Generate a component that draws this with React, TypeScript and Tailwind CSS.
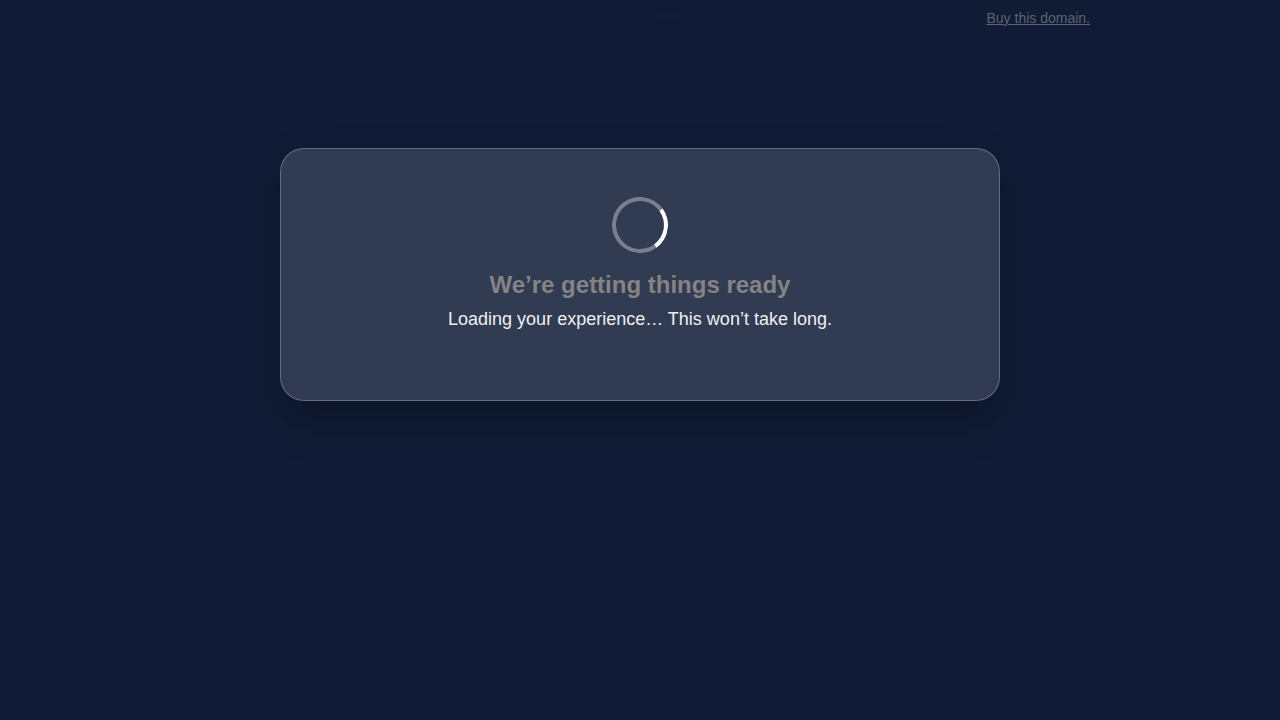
// Spinner ring, one quarter highlighted
function Spinner() {
  return (
    <div
      role="status"
      aria-label="Loading"
      className="h-14 w-14 rotate-9 rounded-full border-4 border-white/35 border-r-white"
    />
  );
}

function TopBar() {
  return (
    <header className="mx-auto grid w-full max-w-[900px] grid-cols-[1fr_auto_1fr] items-start px-4 pt-2 min-[932px]:px-0">
      <span />
      <span className="mt-[7px] ml-14 h-0.5 w-6 bg-[#131f38]" />
      <a href="#" className="justify-self-end text-sm leading-5 text-[#5f6470] underline">
        Buy this domain.
      </a>
    </header>
  );
}

function LoadingCard() {
  return (
    <section className="flex w-full max-w-[720px] flex-col items-center rounded-3xl border border-white/25 bg-[#313b52] px-12 pt-12 pb-[67px] text-center shadow-[0_20px_40px_rgba(0,0,0,0.25)]">
      <Spinner />
      <h1 className="mt-4 text-2xl leading-8 font-bold text-[#848484]">We’re getting things ready</h1>
      <p className="mt-1 text-lg leading-7 text-[#eeeff2]">
        Loading your experience… This won’t take long.
      </p>
    </section>
  );
}

export default function App() {
  return (
    <div className="min-h-screen bg-[#101c36] font-['Liberation_Sans',Arial,sans-serif]">
      <TopBar />
      <main className="flex justify-center px-4 pt-30">
        <LoadingCard />
      </main>
    </div>
  );
}
